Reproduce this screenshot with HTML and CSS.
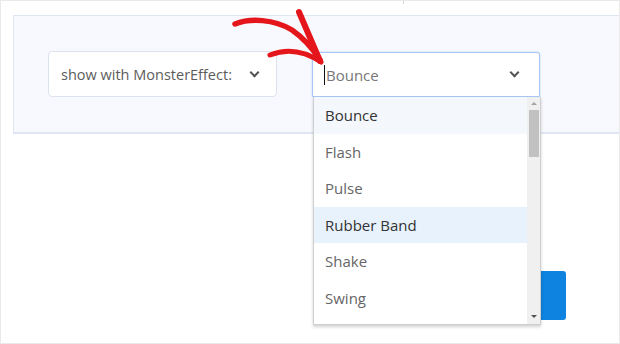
FILE: index.html
```html
<!DOCTYPE html>
<html lang="en">
<head>
    <meta charset="UTF-8">
    <title>MonsterEffect</title>
    <link rel="stylesheet" href="styles.css">
</head>
<body>
    <div class="frame">
        <span class="tick"></span>

        <!-- Settings panel -->
        <div class="panel">
            <div class="select">
                <span class="select-label">show with MonsterEffect:</span>
                <span class="chevron"></span>
            </div>
            <div class="combo">
                <div class="combo-input">
                    <span class="caret"></span>
                    <span class="combo-value">Bounce</span>
                    <span class="chevron"></span>
                </div>
                <div class="dropdown">
                    <ul class="options">
                        <li class="option hover">Bounce</li>
                        <li class="option">Flash</li>
                        <li class="option">Pulse</li>
                        <li class="option active">Rubber Band</li>
                        <li class="option">Shake</li>
                        <li class="option">Swing</li>
                    </ul>
                    <div class="scrollbar">
                        <span class="arrow-up"></span>
                        <span class="thumb"></span>
                        <span class="arrow-down"></span>
                    </div>
                </div>
            </div>
        </div>

        <div class="actions">
            <button class="save-button"></button>
        </div>

        <!-- hand drawn arrow -->
        <svg class="scribble" width="620" height="344" viewBox="0 0 620 344">
            <path d="M235 24 C 250 18, 274 19, 292 30 C 305 39, 313 49, 320 60" fill="none" stroke="#e5161b" stroke-width="5.5" stroke-linecap="round"/>
            <path d="M299 12 C 305 26, 312 42, 320 61" fill="none" stroke="#e5161b" stroke-width="6" stroke-linecap="round"/>
            <path d="M270 55 C 285 49, 303 50, 321 62" fill="none" stroke="#e5161b" stroke-width="5" stroke-linecap="round"/>
        </svg>
    </div>
</body>
</html>
```

FILE: styles.css
```css
/* Global */
body {
    margin: 0;
    font-family: "Open Sans", Arial, sans-serif;
    background: #fff;
}

.frame {
    position: relative;
    width: 620px;
    height: 344px;
    box-sizing: border-box;
    border: 1px solid #e9e9e9;
    overflow: hidden;
}

.tick {
    position: absolute;
    left: 402px;
    top: 0;
    width: 1px;
    height: 3px;
    background: #d6d6d6;
}

/* Panel */
.panel {
    display: flex;
    align-items: flex-start;
    gap: 35px;
    margin: 14px 0 0 12px;
    padding: 35px 0 35px 34px;
    background-color: #f7f9fe;
    border: 1px solid #dfe5f3;
    border-right: none;
    border-bottom-width: 2px;
}

.select {
    display: flex;
    align-items: center;
    justify-content: space-between;
    width: 229px;
    height: 46px;
    box-sizing: border-box;
    padding: 0 18px 0 12px;
    background: #fff;
    border: 1px solid #dde3ee;
    border-radius: 4px;
    color: #5c5c5c;
    font-size: 14.5px;
}

.chevron {
    width: 5px;
    height: 5px;
    border-right: 2px solid #555;
    border-bottom: 2px solid #555;
    transform: rotate(45deg);
    margin-top: -4px;
}

/* Combo box */
.combo {
    position: relative;
    width: 228px;
    margin-top: 1px;
}

.combo-input {
    display: flex;
    align-items: center;
    height: 45px;
    box-sizing: border-box;
    padding: 0 21px 0 11px;
    background: #fff;
    border: 1px solid #a9c7f3;
    border-radius: 3px 3px 0 0;
    box-shadow: 0 0 2px rgba(120, 170, 240, 0.5);
    color: #777;
    font-size: 15px;
}

.caret {
    width: 1px;
    height: 20px;
    background: #111;
    margin-right: 1px;
}

.combo-value {
    flex: 1;
}

.dropdown {
    position: absolute;
    top: 45px;
    left: 1px;
    width: 228px;
    height: 228px;
    box-sizing: border-box;
    display: flex;
    background: #fff;
    border: 1px solid #cfcfcf;
    border-top: none;
    box-shadow: 0 2px 3px rgba(0, 0, 0, 0.18);
}

.options {
    flex: 1;
    list-style: none;
    margin: 0;
    padding: 0;
}

.option {
    height: 36.6px;
    line-height: 37px;
    padding-left: 11px;
    font-size: 15px;
    color: #666;
}

.option.hover {
    background: #f4f7fc;
    color: #333;
}

.option.active {
    background: #e8f2fd;
    color: #333;
}

.scrollbar {
    display: flex;
    flex-direction: column;
    align-items: center;
    width: 13px;
    background: #f0f0f0;
}

.arrow-up,
.arrow-down {
    width: 0;
    height: 0;
    border-left: 3px solid transparent;
    border-right: 3px solid transparent;
}

.arrow-up {
    margin-top: 5px;
    border-bottom: 3px solid #a3a3a3;
}

.arrow-down {
    margin-top: auto;
    margin-bottom: 6px;
    border-top: 3px solid #505050;
}

.thumb {
    width: 10px;
    height: 47px;
    margin-top: 5px;
    background: #c1c1c1;
}

/* Bottom button */
.actions {
    display: flex;
    justify-content: flex-end;
    margin-top: 137px;
    padding-right: 53px;
}

.save-button {
    width: 110px;
    height: 49px;
    border: none;
    border-radius: 3px;
    background: #0f83e0;
}

/* Arrow scribble */
.scribble {
    position: absolute;
    left: -1px;
    top: -1px;
    pointer-events: none;
}
```
